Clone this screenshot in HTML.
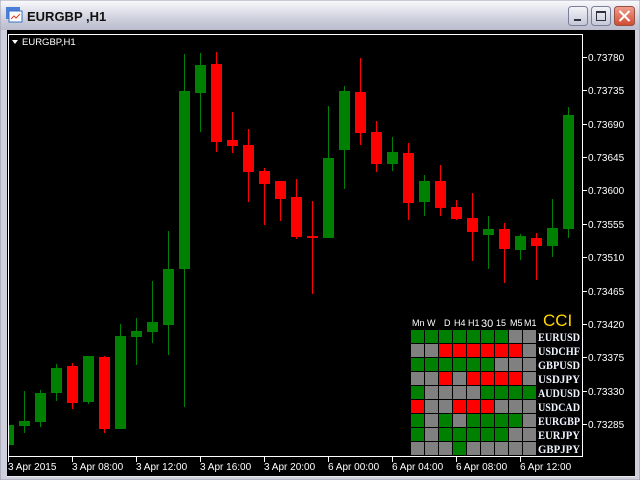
<!DOCTYPE html>
<html><head><meta charset="utf-8"><style>
body{margin:0;width:640px;height:480px;overflow:hidden;background:#d4d0c8;font-family:"Liberation Sans",sans-serif}
</style></head><body>
<svg width="640" height="480" xmlns="http://www.w3.org/2000/svg" style="position:absolute;left:0;top:0">
<defs>
<linearGradient id="tb" x1="0" y1="0" x2="0" y2="1">
<stop offset="0" stop-color="#fbfbfd"/><stop offset="0.3" stop-color="#e4e5ee"/><stop offset="0.7" stop-color="#c9cad8"/><stop offset="1" stop-color="#b9bacb"/></linearGradient>
<linearGradient id="bt" x1="0" y1="0" x2="0" y2="1"><stop offset="0" stop-color="#f4f4f8"/><stop offset="1" stop-color="#c4c6d6"/></linearGradient>
<linearGradient id="bx" x1="0" y1="0" x2="0" y2="1"><stop offset="0" stop-color="#f0a090"/><stop offset="1" stop-color="#d24a30"/></linearGradient>
</defs>
<rect x="0" y="0" width="640" height="480" fill="#c0c0d0"/>
<rect x="0" y="0" width="640" height="31" fill="url(#tb)"/>
<rect x="1" y="30" width="638" height="450" fill="#cfd0dc"/>
<rect x="0" y="0" width="640" height="480" fill="none" stroke="#9c9cb0" stroke-width="1"/>
<rect x="6" y="7" width="14" height="12" fill="#4a7fd8"/><rect x="9" y="11" width="13" height="11" fill="#fff" stroke="#3a6fc8"/>
<path d="M11 19 L14 16 L16 18 L20 14" stroke="#e04020" fill="none"/>
<text x="27" y="21" font-size="13" font-weight="bold" fill="#111">EURGBP ,H1</text>
<rect x="568.5" y="6.5" width="19" height="19" rx="3" fill="url(#bt)" stroke="#7a7e9a"/>
<rect x="574" y="19" width="7" height="2" fill="#303040"/>
<rect x="591.5" y="6.5" width="19" height="19" rx="3" fill="url(#bt)" stroke="#7a7e9a"/>
<rect x="596.5" y="11.5" width="9" height="9" fill="none" stroke="#303040"/><rect x="596" y="11" width="10" height="2" fill="#303040"/>
<rect x="614.5" y="6.5" width="20" height="19" rx="3" fill="url(#bx)" stroke="#9a5040"/>
<path d="M619.5 11 L629.5 21 M629.5 11 L619.5 21" stroke="#fff" stroke-width="2"/>
<rect x="7" y="30" width="628" height="447" fill="#000"/>
<path d="M8.5 34 V456.5 H582.5 V34.5 H8.5" fill="none" stroke="#fff"/>
<path d="M7 476.5 H635" stroke="#e8e8f0"/>
<polygon points="12,40 18,40 15,44" fill="#fff"/>
<text x="22" y="45" font-size="9.5" fill="#fff">EURGBP,H1</text>
<g font-size="10" fill="#fff">
<g stroke="#fff">
<path d="M582 57.5h5M582 90.5h5M582 124.5h5M582 157.5h5M582 190.5h5M582 224.5h5M582 257.5h5M582 291.5h5M582 324.5h5M582 357.5h5M582 391.5h5M582 424.5h5"/>
<path d="M8.5 457v5M72.5 457v5M136.5 457v5M200.5 457v5M264.5 457v5M328.5 457v5M392.5 457v5M456.5 457v5M520.5 457v5"/>
</g>
<text x="588" y="61">0.73780</text><text x="588" y="94">0.73735</text><text x="588" y="128">0.73690</text><text x="588" y="161">0.73645</text><text x="588" y="194">0.73600</text><text x="588" y="228">0.73555</text><text x="588" y="261">0.73510</text><text x="588" y="295">0.73465</text><text x="588" y="328">0.73420</text><text x="588" y="361">0.73375</text><text x="588" y="395">0.73330</text><text x="588" y="428">0.73285</text>
<text x="8" y="470">3 Apr 2015</text><text x="72" y="470">3 Apr 08:00</text><text x="136" y="470">3 Apr 12:00</text><text x="200" y="470">3 Apr 16:00</text><text x="264" y="470">3 Apr 20:00</text><text x="328" y="470">6 Apr 00:00</text><text x="392" y="470">6 Apr 04:00</text><text x="456" y="470">6 Apr 08:00</text><text x="520" y="470">6 Apr 12:00</text>
</g>
<g id="c">
<rect x="9" y="425" width="5" height="20" fill="#008000"/>
</g>
<script>
var d=[[24,'g',421,426,391,433],[40,'g',393,422,390,427],[56,'g',368,393,364,401],[72,'r',366,403,363,409],[88,'g',356,402,356,404],[104,'r',357,429,356,433],[120,'g',336,429,324,429],[136,'g',331,337,318,365],[152,'g',322,332,281,343],[168,'g',269,325,231,355],[184,'g',91,269,54,407],[200,'g',65,93,53,132],[216,'r',64,142,52,152],[232,'r',140,146,112,153],[248,'r',145,172,129,202],[264,'r',171,184,168,225],[280,'r',181,199,181,221],[296,'r',197,237,179,239],[312,'r',236,238,201,294],[328,'g',158,238,106,238],[344,'g',91,150,86,189],[360,'r',92,133,58,145],[376,'r',132,164,121,172],[392,'g',152,164,137,171],[408,'r',153,203,143,220],[424,'g',181,202,175,216],[440,'r',181,208,165,216],[456,'r',207,219,200,220],[472,'r',218,232,193,261],[488,'g',229,235,216,269],[504,'r',229,249,223,283],[520,'g',236,250,234,260],[536,'r',238,246,233,280],[552,'g',228,246,199,257],[568,'g',115,229,107,238]];
var NS='http://www.w3.org/2000/svg',g=document.getElementById('c');
d.forEach(function(c){var col=c[1]=='g'?'#008000':'#ff0000';
var w=document.createElementNS(NS,'rect');w.setAttribute('x',c[0]);w.setAttribute('y',c[4]);w.setAttribute('width',1);w.setAttribute('height',c[5]-c[4]);w.setAttribute('fill',col);g.appendChild(w);
var b=document.createElementNS(NS,'rect');b.setAttribute('x',c[0]-5);b.setAttribute('y',c[2]);b.setAttribute('width',11);b.setAttribute('height',Math.max(2,c[3]-c[2]));b.setAttribute('fill',col);g.appendChild(b);});
</script>
<rect x="410" y="312" width="172" height="144" fill="#000"/>
<g font-size="9" fill="#fff">
<text x="412" y="326">Mn</text><text x="427" y="326">W</text><text x="444" y="326">D</text><text x="454" y="326">H4</text><text x="468" y="326">H1</text><text x="481" y="327" font-size="11">30</text><text x="496" y="326">15</text><text x="510" y="326">M5</text><text x="524" y="326">M1</text>
</g>
<text x="543" y="326" font-size="17" fill="#ffd700">CCI</text>
<g id="grid"></g>
<g font-family="'Liberation Serif',serif" font-weight="bold" font-size="12" fill="#f0f4ff">
<text x="538" y="341" textLength="42" lengthAdjust="spacingAndGlyphs">EURUSD</text><text x="538" y="355" textLength="42" lengthAdjust="spacingAndGlyphs">USDCHF</text><text x="538" y="369" textLength="42" lengthAdjust="spacingAndGlyphs">GBPUSD</text><text x="538" y="383" textLength="42" lengthAdjust="spacingAndGlyphs">USDJPY</text><text x="538" y="397" textLength="42" lengthAdjust="spacingAndGlyphs">AUDUSD</text><text x="538" y="411" textLength="42" lengthAdjust="spacingAndGlyphs">USDCAD</text><text x="538" y="425" textLength="42" lengthAdjust="spacingAndGlyphs">EURGBP</text><text x="538" y="439" textLength="42" lengthAdjust="spacingAndGlyphs">EURJPY</text><text x="538" y="453" textLength="42" lengthAdjust="spacingAndGlyphs">GBPJPY</text>
</g>
<script>
var rows=['GGGGGGGAA','AARRRRRRA','GGGGGGAAA','AARARRRRA','GAAAAGGGG','RAARRRAAA','GAGAGGGGA','GAGGGGGAA','AAAGAAAAA'];
var gg=document.getElementById('grid'),cm={G:'#008000',R:'#ff0000',A:'#808080'};
rows.forEach(function(r,i){for(var j=0;j<9;j++){var e=document.createElementNS(NS,'rect');e.setAttribute('x',411+j*14);e.setAttribute('y',330+i*14);e.setAttribute('width',13);e.setAttribute('height',13);e.setAttribute('fill',cm[r[j]]);gg.appendChild(e);}});
</script>
</svg>
</body></html>
